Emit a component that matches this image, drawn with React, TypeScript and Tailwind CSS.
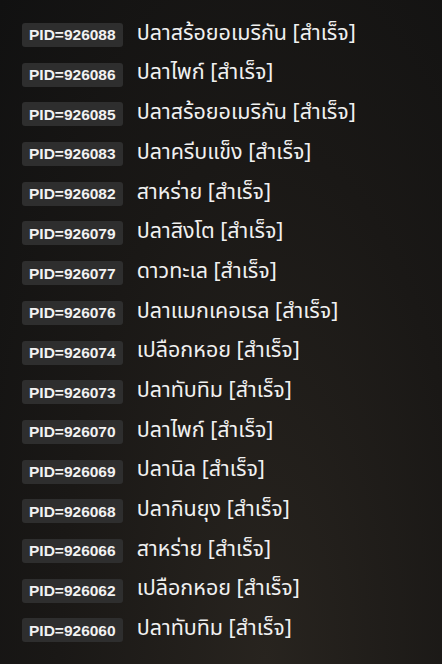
import React from "react";

const rows: [string, string][] = [
  ["926088", "ปลาสร้อยอเมริกัน"],
  ["926086", "ปลาไพก์"],
  ["926085", "ปลาสร้อยอเมริกัน"],
  ["926083", "ปลาครีบแข็ง"],
  ["926082", "สาหร่าย"],
  ["926079", "ปลาสิงโต"],
  ["926077", "ดาวทะเล"],
  ["926076", "ปลาแมกเคอเรล"],
  ["926074", "เปลือกหอย"],
  ["926073", "ปลาทับทิม"],
  ["926070", "ปลาไพก์"],
  ["926069", "ปลานิล"],
  ["926068", "ปลากินยุง"],
  ["926066", "สาหร่าย"],
  ["926062", "เปลือกหอย"],
  ["926060", "ปลาทับทิม"],
];

export default function App() {
  return (
    <div className="w-[442px] h-[664px] overflow-hidden bg-[radial-gradient(ellipse_at_60%_100%,#28241f_0%,#1a1816_55%,#111111_100%)]">
      <div className="flex flex-col gap-[15.7px] pt-[23px] pl-[22px]">
        {rows.map(([pid, name], i) => (
          <div key={i} className="flex items-center gap-[14px] h-[24px]">
            <span className="h-[24px] flex items-center px-[7px] rounded-[3px] bg-[#2e2e2e] text-[#f2f2f2] text-[15.5px] font-bold font-['Liberation_Sans',Arial,sans-serif]">
              PID={pid}
            </span>
            <span className="text-[21.5px] -mt-[3px] text-[#f0f0f0] font-['Noto_Sans_Thai','Noto_Sans',sans-serif] leading-none">
              {name} [สำเร็จ]
            </span>
          </div>
        ))}
      </div>
    </div>
  );
}
